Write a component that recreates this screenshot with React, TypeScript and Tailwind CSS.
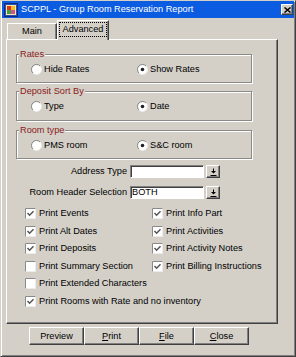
import React from "react";

const raised =
  "border border-t-white border-l-white border-r-[#404040] border-b-[#404040] shadow-[inset_-1px_-1px_0_#808080]";
const sunken =
  "border border-t-[#808080] border-l-[#808080] border-r-white border-b-white shadow-[inset_1px_1px_0_#404040]";

function Radio({ checked }: { checked?: boolean }) {
  return (
    <svg width="11" height="11" viewBox="0 0 11 11" className="shrink-0">
      <circle cx="5.5" cy="5.5" r="5" fill="#fff" />
      <path d="M1.96 9.04 A5 5 0 0 1 9.04 1.96" stroke="#808080" fill="none" />
      <path d="M9.04 1.96 A5 5 0 0 1 1.96 9.04" stroke="#ececec" fill="none" />
      {checked && <circle cx="5.5" cy="5.5" r="1.8" fill="#222" />}
    </svg>
  );
}

function Check({ checked }: { checked?: boolean }) {
  return (
    <svg width="11" height="11" viewBox="0 0 11 11" className="shrink-0">
      <rect x="0.5" y="0.5" width="10" height="10" fill="#fff" stroke="#ececec" />
      <path d="M0.5 10.5 V0.5 H10.5" stroke="#8a8a8a" fill="none" />
      {checked && (
        <path d="M2.5 5 L4.6 7.2 L8.5 3.2" stroke="#555" strokeWidth="1.5" fill="none" />
      )}
    </svg>
  );
}

function DropButton() {
  return (
    <div className={`w-[14px] h-[13px] bg-[#d4d0c8] flex items-center justify-center ${raised}`}>
      <svg width="7" height="8" viewBox="0 0 7 8">
        <path d="M3.5 0.5 V4" stroke="#000" />
        <path d="M1 3 L3.5 5.6 L6 3 Z" fill="#000" />
        <path d="M0.5 7.5 H6.5" stroke="#000" />
      </svg>
    </div>
  );
}

function Group({
  label,
  left,
  right,
  className,
}: {
  label: string;
  left: string;
  right: string;
  className: string;
}) {
  return (
    <div
      className={`relative border border-[#8c8a86] shadow-[inset_1px_1px_0_#fff,1px_1px_0_#fff] ${className}`}
    >
      <span className="absolute left-[2px] -top-[7px] px-[1px] bg-[#d4d0c8] text-[#8b1a1a] leading-[12px]">
        {label}
      </span>
      <div className="grid grid-cols-[106px_auto] pl-[14px] pt-[9px]">
        <div className="flex items-center gap-[2px] h-[11px]">
          <Radio />
          <span>{left}</span>
        </div>
        <div className="flex items-center gap-[2px] h-[11px]">
          <Radio checked />
          <span>{right}</span>
        </div>
      </div>
    </div>
  );
}

function Field({ label, value, className }: { label: string; value: string; className: string }) {
  return (
    <div className={`flex items-center h-[13px] ${className}`}>
      <span className="w-[114px] text-right pr-[3px]">{label}</span>
      <div className={`w-[74px] h-[13px] bg-white pl-[1px] leading-[11px] ${sunken}`}>{value}</div>
      <div className="ml-[2px]">
        <DropButton />
      </div>
    </div>
  );
}

function CheckRow({ label, checked }: { label: string; checked?: boolean }) {
  return (
    <div className="flex items-center gap-[3px] h-[17.5px]">
      <Check checked={checked} />
      <span>{label}</span>
    </div>
  );
}

function Btn({ children }: { children: React.ReactNode }) {
  return (
    <div className={`w-[55px] h-[18px] flex items-center justify-center bg-[#d4d0c8] ${raised}`}>
      {children}
    </div>
  );
}

export default function App() {
  return (
    <div className="w-[296px] h-[357px] bg-[#d4d0c8] border border-t-[#d4d0c8] border-l-[#d4d0c8] border-r-[#404040] border-b-[#404040] shadow-[inset_1px_1px_0_#fff,inset_-1px_-1px_0_#808080] flex flex-col font-['Liberation_Sans',Arial,sans-serif] text-[9.2px] leading-[11px]">
      {/* title bar */}
      <div className="shrink-0 h-[17px] mx-[1px] bg-[#0c5ce2] flex items-center pl-[2px] pr-[1px]">
        <svg width="14" height="14" viewBox="0 0 14 14" className="shrink-0">
          <rect x="0.5" y="0.5" width="13" height="13" fill="#2a4fb0" stroke="#102a80" />
          <rect x="2" y="2" width="10" height="10" fill="#f4e7b0" />
          <rect x="3" y="3" width="4" height="4" fill="#e03020" />
          <rect x="7" y="3" width="4" height="4" fill="#f0c020" />
          <rect x="3" y="7" width="4" height="4" fill="#40a040" />
          <rect x="7" y="7" width="4" height="4" fill="#d05090" />
        </svg>
        <span className="ml-[3px] flex-1 text-white">SCPPL - Group Room Reservation Report</span>
        <div className={`w-[12px] h-[11px] bg-[#d4d0c8] flex items-center justify-center ${raised}`}>
          <svg width="7" height="6" viewBox="0 0 7 6">
            <path d="M0.5 0.5 L6.5 5.5 M6.5 0.5 L0.5 5.5" stroke="#000" strokeWidth="1.5" />
          </svg>
        </div>
      </div>

      {/* tabs */}
      <div className="h-[21px] ml-[6px] flex items-end text-black">
        <div className="w-[50px] h-[16px] border border-t-white border-l-white border-r-[#404040] border-b-0 shadow-[inset_-1px_0_0_#808080] flex items-center justify-center">
          Main
        </div>
        <div className="relative z-10 -mb-[1px] w-[52px] h-[20px] bg-[#d4d0c8] border border-t-white border-l-white border-r-[#404040] border-b-0 shadow-[inset_-1px_0_0_#808080] p-[1px]">
          <div className="h-[15px] border border-dotted border-black flex items-center justify-center">
            Advanced
          </div>
        </div>
      </div>

      {/* panel */}
      <div className="ml-[5px] w-[272px] h-[285px] border border-t-white border-l-white border-r-[#404040] border-b-[#404040] shadow-[inset_-1px_-1px_0_#808080] flex flex-col text-black">
        <div className="ml-[9px] w-[236px] mt-[14px] flex flex-col">
          <Group label="Rates" left="Hide Rates" right="Show Rates" className="h-[29px]" />
          <Group label="Deposit Sort By" left="Type" right="Date" className="h-[30px] mt-[8px]" />
          <Group label="Room type" left="PMS room" right="S&C room" className="h-[29px] mt-[9px]" />
        </div>
        <Field label="Address Type" value="" className="mt-[6px] ml-[9px]" />
        <Field label="Room Header Selection" value="BOTH" className="mt-[8px] ml-[9px]" />
        <div className="mt-[6px] ml-[18px] grid grid-cols-[127px_auto]">
          <CheckRow label="Print Events" checked />
          <CheckRow label="Print Info Part" checked />
          <CheckRow label="Print Alt Dates" checked />
          <CheckRow label="Print Activities" checked />
          <CheckRow label="Print Deposits" checked />
          <CheckRow label="Print Activity Notes" checked />
          <CheckRow label="Print Summary Section" />
          <CheckRow label="Print Billing Instructions" checked />
          <div className="col-span-2">
            <CheckRow label="Print Extended Characters" />
          </div>
          <div className="col-span-2">
            <CheckRow label="Print Rooms with Rate and no inventory" checked />
          </div>
        </div>
      </div>

      {/* buttons */}
      <div className="mt-[3px] ml-[28px] flex text-black">
        <Btn>Preview</Btn>
        <Btn>
          <span>
            <span className="underline">P</span>rint
          </span>
        </Btn>
        <Btn>
          <span>
            <span className="underline">F</span>ile
          </span>
        </Btn>
        <Btn>
          <span>
            <span className="underline">C</span>lose
          </span>
        </Btn>
      </div>
    </div>
  );
}
